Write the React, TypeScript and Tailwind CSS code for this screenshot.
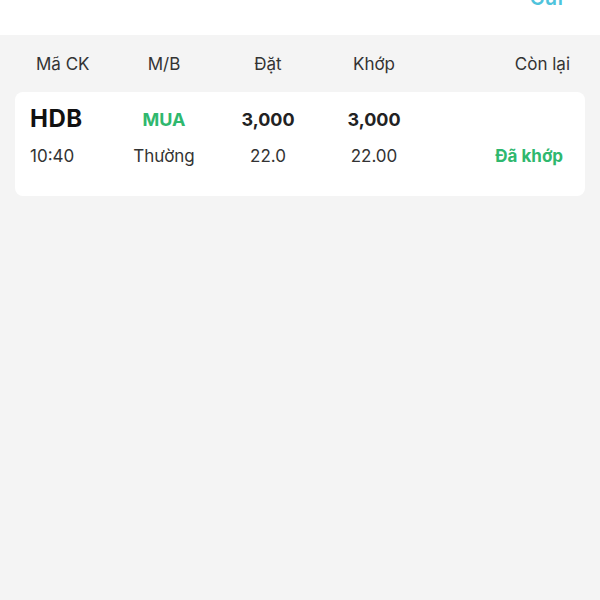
export default function App() {
  return (
    <div className="w-[600px] h-[600px] bg-[#f4f4f4] overflow-hidden font-['Inter','Noto_Sans',sans-serif]">
      {/* Top bar */}
      <div className="h-[35px] bg-white flex justify-end pr-[37px] overflow-hidden">
        <span className="-mt-[15px] text-[20px] leading-[26px] font-semibold text-[#4fc3dc]">Gửi</span>
      </div>

      {/* Column header */}
      <div className="flex items-center pt-[16px] pb-[15px] text-[17px] leading-[26px] text-[#333]">
        <div className="w-[128px] pl-[36px]">Mã CK</div>
        <div className="w-[72px] text-center">M/B</div>
        <div className="w-[136px] text-center">Đặt</div>
        <div className="w-[76px] text-center">Khớp</div>
        <div className="flex-1 text-right pr-[30px]">Còn lại</div>
      </div>

      {/* Order card */}
      <div className="mx-[15px] bg-white rounded-[8px] pt-[13px] pb-[26px] pl-[15px] pr-[22px]">
        <div className="flex items-center h-[28px]">
          <div className="w-[98px] text-[24px] font-bold tracking-[0.5px] text-[#111]">HDB</div>
          <div className="w-[72px] text-center text-[18px] font-bold text-[#2fb86e]">MUA</div>
          <div className="w-[136px] text-center text-[18px] font-bold text-[#222]">3,000</div>
          <div className="w-[76px] text-center text-[18px] font-bold text-[#222]">3,000</div>
          <div className="flex-1" />
        </div>
        <div className="flex items-center h-[26px] mt-[11px] text-[17px] text-[#333]">
          <div className="w-[98px]">10:40</div>
          <div className="w-[72px] text-center">Thường</div>
          <div className="w-[136px] text-center">22.0</div>
          <div className="w-[76px] text-center">22.00</div>
          <div className="flex-1 text-right font-bold text-[#2fb86e]">Đã khớp</div>
        </div>
      </div>
    </div>
  );
}
